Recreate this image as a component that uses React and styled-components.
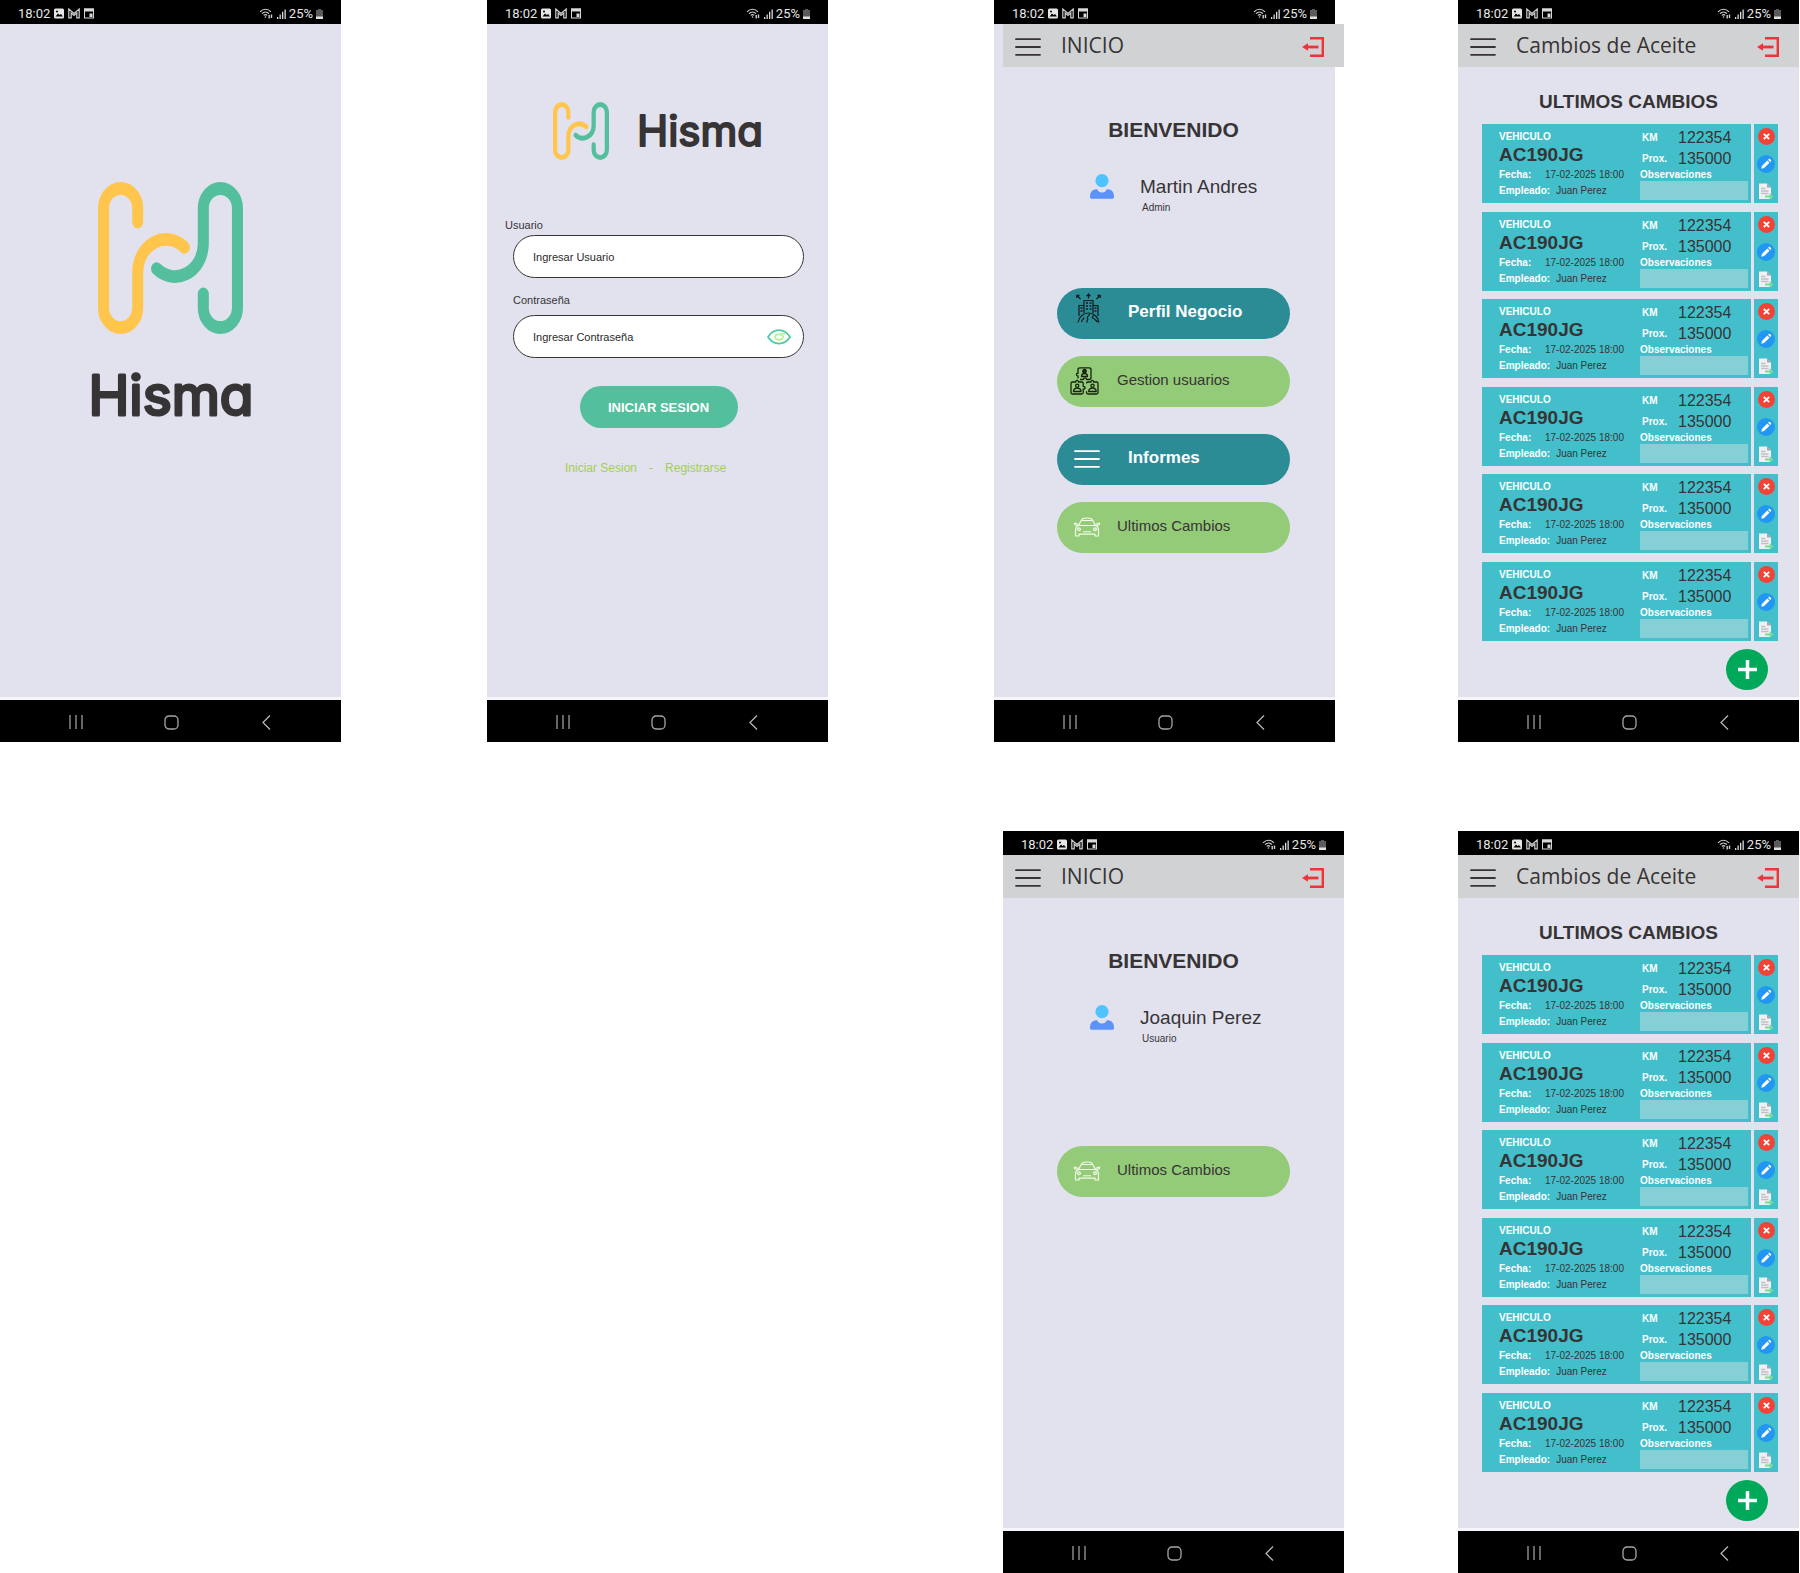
import React, { useId } from "react";
import styled, { createGlobalStyle } from "styled-components";

const color = {
  ink: "#373435",
  screen: "#e2e2ef",
  header: "#d1d2d4",
  card: "#42bfcb",
  field: "#84d0d6",
  green: "#54bf9d",
  yellow: "#ffc54d",
  teal: "#2c8c96",
  lime: "#94cb78",
  link: "#a2d04a",
  red: "#f03339",
};

const GlobalStyle = createGlobalStyle`
  *, *::before, *::after { box-sizing: border-box; }
  body {
    margin: 0;
    background: #fff;
    color: ${color.ink};
    font-family: "Liberation Sans", Arial, sans-serif;
  }
  h1, h2, p, dl, dt, dd, ul { margin: 0; padding: 0; font-weight: inherit; }
  button, input { font: inherit; color: inherit; margin: 0; padding: 0; }
  button { border: 0; background: none; cursor: pointer; }
  a { color: inherit; text-decoration: none; }
  svg { display: block; flex: none; }
`;

const Board = styled.main`
  display: grid;
  grid-template-columns:
    minmax(341px, 487fr) minmax(341px, 507fr)
    minmax(350px, 464fr) 342px;
  row-gap: 89px;
  align-items: start;
`;

const Slot = styled.div`
  grid-column: ${(p) => p.$column};
  width: ${(p) => (p.$wide ? "350px" : "341px")};
  display: flex;
  justify-content: ${(p) => (p.$end ? "flex-end" : "flex-start")};
`;

/* ---------- phone shell ---------- */

const Shell = styled.section`
  width: 341px;
  min-height: 742px;
  display: flex;
  flex-direction: column;
`;

const StatusBar = styled.div`
  height: 24px;
  padding: 3px 18px 0 18px;
  display: flex;
  align-items: center;
  justify-content: space-between;
  background: #000;
  color: #e6e6e6;
  font: 13px/20px Roboto, sans-serif;
`;

const StatusGroup = styled.div`
  display: flex;
  align-items: center;
  gap: 3px;
`;

const Screen = styled.div`
  flex: 1;
  background: ${color.screen};
  border-bottom: 3px solid #f5f5fa;
`;

const NavBar = styled.nav`
  height: 42px;
  padding: 2px 59px 0 60px;
  display: flex;
  align-items: center;
  justify-content: space-between;
  background: #000;
`;

const NavButton = styled.button`
  width: 32px;
  height: 32px;
  display: grid;
  place-items: center;
`;

function Phone({ label, children }) {
  return (
    <Shell aria-label={label}>
      <StatusBar>
        <StatusGroup>
          <span>18:02</span>
          <svg width="12" height="11" viewBox="0 0 12 11">
            <rect x="1" y="0.5" width="10" height="10" rx="1.5" fill="#e6e6e6" />
            <path d="M2.5 8.5 5 5.5l1.6 1.6L8 6l2 2.5z" fill="#000" />
            <circle cx="4" cy="3.4" r="1" fill="#000" />
          </svg>
          <svg width="12" height="11" viewBox="0 0 12 11" fill="none" stroke="#cfcfcf" strokeWidth="1.2">
            <path d="M.8 1v8.800h2.400V5L6 7.500 8.800 5v4.800h2.400V1L6 5.500z" />
          </svg>
          <svg width="12" height="11" viewBox="0 0 12 11">
            <rect x="1.5" y="1" width="9" height="9" fill="none" stroke="#d8d8d8" />
            <path d="M1 .5h10v3.100H1zM6.500 5.500h3v3.500h-3z" fill="#d8d8d8" />
          </svg>
        </StatusGroup>
        <StatusGroup>
          <svg width="15" height="11" viewBox="0 0 14 11" fill="none" stroke="#cfcfcf" strokeWidth="1.200">
            <path d="M.6 3.800C3.800.4 8.200.4 11.400 3.800M2.500 5.600c2-2 5-2 7 0M4.300 7.400c1-1 2.400-1 3.400 0" />
            <circle cx="6" cy="9" r="0.8" fill="#cfcfcf" stroke="none" />
            <path d="M9.700 7v3.500M12 6.500V10" strokeWidth="1.400" />
          </svg>
          <svg width="9" height="10" viewBox="0 0 9 10" fill="#dcdcdc">
            <path d="M0 8h1.300v2H0zM2.500 5.500h1.300V10H2.500zM5 2.800h1.300V10H5zM7.500.500h1.300V10H7.500z" />
          </svg>
          <span>25%</span>
          <svg width="7" height="10" viewBox="0 0 7 10">
            <path d="M2 0h3v1h2v9H0V1h2z" fill="#5b5b5b" />
            <path d="M0 7.500h7V10H0z" fill="#e0e0e0" />
          </svg>
        </StatusGroup>
      </StatusBar>
      <Screen>{children}</Screen>
      <NavBar aria-label="Sistema">
        <NavButton type="button" aria-label="Recientes">
          <svg width="14" height="14" viewBox="0 0 14 14" stroke="#9b9b9b" strokeWidth="1.300">
            <path d="M1 0v14M7 0v14M13 0v14" />
          </svg>
        </NavButton>
        <NavButton type="button" aria-label="Inicio">
          <svg width="15" height="15" viewBox="0 0 15 15" fill="none" stroke="#a5a5a5" strokeWidth="1.300">
            <rect x="1" y="1" width="13" height="13" rx="4" />
          </svg>
        </NavButton>
        <NavButton type="button" aria-label="Volver">
          <svg width="9" height="15" viewBox="0 0 9 15" fill="none" stroke="#b5b5b5" strokeWidth="1.300">
            <path d="M8 .5 1 7.500l7 7" />
          </svg>
        </NavButton>
      </NavBar>
    </Shell>
  );
}

/* ---------- brand ---------- */

const loop =
  "M138.300 120V79A59.500 59.500 0 0 0 19.250 79V377A59.500 59.500 0 0 0 138.300 377V268.600A98.600 98.600 0 0 1 301 196";

function Mark({ width, height }) {
  return (
    <svg width={width} height={height} viewBox="0 0 505 456" preserveAspectRatio="none" aria-hidden="true">
      <g fill="none" strokeWidth="38.500" strokeLinecap="round">
        <path d={loop} stroke={color.yellow} />
        <path d={loop} stroke={color.green} transform="rotate(180 252.500 228)" />
      </g>
    </svg>
  );
}

const WordText = styled.text`
  font-family: Inter, "Open Sans", sans-serif;
  font-size: ${(p) => p.$size}px;
  font-weight: 400;
  font-feature-settings: "cv11";
  fill: ${color.ink};
  stroke: ${color.ink};
  stroke-width: ${(p) => p.$stroke}px;
  stroke-linejoin: round;
`;

function Wordmark({ size, stroke, width, height, baseline }) {
  return (
    <svg width={width} height={height}>
      <WordText x={width / 2} y={baseline} textAnchor="middle" $size={size} $stroke={stroke}>
        Hisma
      </WordText>
    </svg>
  );
}

const Splash = styled.div`
  padding-top: 158px;
  display: flex;
  flex-direction: column;
  align-items: center;
  gap: 27px;
`;

/* ---------- login ---------- */

const LoginForm = styled.form`
  padding-top: 78px;
  display: flex;
  flex-direction: column;
`;

const Brand = styled.div`
  padding-left: 66px;
  display: flex;
  align-items: center;
  gap: 26px;
`;

const Field = styled.div`
  margin-top: ${(p) => p.$top}px;
  padding: 0 24px 0 26px;
  display: flex;
  flex-direction: column;
  gap: ${(p) => p.$gap}px;
`;

const FieldLabel = styled.label`
  margin-left: ${(p) => (p.$outdent ? "-8px" : "0")};
  font-size: 11px;
  line-height: 14px;
`;

const FieldBox = styled.div`
  height: 43px;
  padding: 0 12px 0 19px;
  display: flex;
  align-items: center;
  border: 1px solid ${color.ink};
  border-radius: 22px;
  background: #fff;
`;

const TextInput = styled.input`
  flex: 1;
  min-width: 0;
  height: 100%;
  border: 0;
  outline: 0;
  background: none;
  font-size: 11px;
  &::placeholder { color: #2b2a29; opacity: 1; }
`;

const Submit = styled.button`
  align-self: center;
  width: 158px;
  height: 42px;
  margin: 28px 0 0 2px;
  border-radius: 21px;
  background: ${color.green};
  color: #fff;
  font-size: 13px;
  font-weight: 700;
`;

const Links = styled.div`
  margin-top: 33px;
  padding-left: 78px;
  display: flex;
  gap: 12px;
  color: ${color.link};
  font-size: 12px;
  line-height: 14px;
`;

function Login() {
  const user = useId();
  const pass = useId();
  return (
    <LoginForm onSubmit={(e) => e.preventDefault()}>
      <Brand>
        <Mark width={56} height={58} />
        <Wordmark size={42} stroke={2} width={130} height={54} baseline={42} />
      </Brand>
      <Field $top={58} $gap={3}>
        <FieldLabel htmlFor={user} $outdent>Usuario</FieldLabel>
        <FieldBox>
          <TextInput id={user} type="text" placeholder="Ingresar Usuario" />
        </FieldBox>
      </Field>
      <Field $top={15} $gap={8}>
        <FieldLabel htmlFor={pass}>Contraseña</FieldLabel>
        <FieldBox>
          <TextInput id={pass} type="password" placeholder="Ingresar Contraseña" />
          <button type="button" aria-label="Mostrar contraseña">
            <svg width="24" height="16" viewBox="0 0 24 16" fill="none" strokeWidth="1.800">
              <path d="M1 8C3.500 4.200 7.500 1.200 12 1.200S20.500 4.200 23 8c-2.500 3.800-6.500 6.600-11 6.600S3.500 11.800 1 8z" stroke="#4dc9a3" />
              <ellipse cx="12" cy="8" rx="4" ry="2.700" stroke="#bdf09a" strokeWidth="2" />
              <path d="M14.500 4.800h4" stroke="#bdf09a" strokeWidth="1.500" />
            </svg>
          </button>
        </FieldBox>
      </Field>
      <Submit type="submit">INICIAR SESION</Submit>
      <Links>
        <a href="#iniciar">Iniciar Sesion</a>
        <span>-</span>
        <a href="#registrarse">Registrarse</a>
      </Links>
    </LoginForm>
  );
}

/* ---------- app header ---------- */

const HeaderBar = styled.header`
  height: 43px;
  padding: 0 20px 0 12px;
  display: flex;
  align-items: center;
  background: ${color.header};
`;

const HeaderTitle = styled.h1`
  flex: 1;
  padding: 0 0 2px 20px;
  font: 21px/26px "Open Sans", "Noto Sans", sans-serif;
`;

const HeaderButton = styled.button`
  padding-top: 2px;
`;

function Bars({ stroke }) {
  return (
    <svg width="26" height="18" viewBox="0 0 26 18" stroke={stroke} strokeWidth="1.800" strokeLinecap="round">
      <path d="M1 1.200h24M1 9h24M1 16.800h24" />
    </svg>
  );
}

function Header({ title }) {
  return (
    <HeaderBar>
      <HeaderButton type="button" aria-label="Menú">
        <Bars stroke={color.ink} />
      </HeaderButton>
      <HeaderTitle>{title}</HeaderTitle>
      <HeaderButton type="button" aria-label="Salir">
        <svg width="22" height="20" viewBox="0 0 22 20">
          <path d="M8 1.200h12.800v17.600H8" fill="none" stroke={color.red} strokeWidth="2.400" />
          <path d="M5 10h11.500" stroke={color.red} strokeWidth="2.800" />
          <path d="M0 10l6-3.800v7.600z" fill={color.red} />
        </svg>
      </HeaderButton>
    </HeaderBar>
  );
}

/* ---------- home ---------- */

const HomeView = styled.div`
  margin: ${(p) => (p.$shifted ? "0 -9px 0 9px" : "0")};
`;

const Welcome = styled.h2`
  padding-top: 50px;
  text-align: center;
  font-size: 21px;
  line-height: 26px;
  font-weight: 700;
`;

const UserRow = styled.div`
  margin-top: 31px;
  padding-left: 87px;
  display: flex;
  align-items: flex-start;
  gap: 26px;
`;

const UserName = styled.p`
  font-size: 19px;
  line-height: 26px;
`;

const UserRole = styled.p`
  padding-left: 2px;
  font-size: 10px;
  line-height: 16px;
`;

const Menu = styled.div`
  margin-top: ${(p) => (p.$low ? "99px" : "72px")};
  padding: 0 54px;
  display: flex;
  flex-direction: column;
  gap: 27px;
`;

const MenuGroup = styled.div`
  display: flex;
  flex-direction: column;
  gap: 17px;
`;

const Pill = styled.button`
  height: 51px;
  padding-bottom: 4px;
  display: flex;
  align-items: center;
  border-radius: 26px;
  text-align: left;
  background: ${(p) => (p.$main ? color.teal : color.lime)};
  color: ${(p) => (p.$main ? "#fff" : color.ink)};
  font-size: ${(p) => (p.$main ? 17 : 15)}px;
  font-weight: ${(p) => (p.$main ? 700 : 400)};
`;

const PillIcon = styled.span`
  width: 60px;
  margin-right: ${(p) => (p.$main ? "11px" : "0")};
  padding-top: 3px;
  display: flex;
  justify-content: center;
`;

const CityIcon = () => (
  <svg width="28" height="40" viewBox="-3 0 28 40" fill="none" stroke="#10191b" strokeWidth="1.200">
    <path d="M8 20V7.500h9V20M8 12.500H3V23M17 12.500h5V23" />
    <path d="M10 10h2M13.500 10h2M10 13h2M13.500 13h2M10 16h2M13.500 16h2M4.500 15h2M4.500 18h2M18.500 15h2M18.500 18h2" strokeWidth="1.600" />
    <path d="M2 29.500c1-6 5.500-9.500 10.500-9.500S22 23.500 23 29.500M5.500 29c.5-2.500 2-2.500 2.500-4.500M11 29.500c-.5-2 1.500-2.500.5-4.500s2-2 2-4M22 29c-2-.5-2.500-3-4.500-3.500s-1-2 0-3" />
    <path d="M12.500 5.500V1.500M4.500 6 1.500 3M20.500 6l3-3" />
    <path d="M10.500 3l2-2.500 2 2.500zM.5 5V2h3zM24.500 5V2h-3z" fill="#10191b" strokeWidth=".6" />
  </svg>
);

const TeamIcon = () => (
  <svg width="34" height="28" viewBox="0 0 34 28" fill="none" stroke="#16210f" strokeWidth="1.300" strokeLinejoin="round">
    <path d="M8 11.500V8.800c-2 .6-2-3 0-2.500V2.500C8 1 8.500.8 10 .8h9c1.500 0 2 .4 2 1.700v8c0 1.500-.5 2-2 2h-2.500c.5-2-3.500-2-3 0H10" />
    <circle cx="14.500" cy="4.200" r="1.700" fill="#16210f" />
    <path d="M11.500 9.500c0-4 6-4 6 0z" />
    <path d="M2.500 15h3.300c-.6-2 3.200-2 2.600 0h3.300c1 0 1.500.5 1.500 1.500v3c2.500-.8 2.500 3.300 0 2.500v3.500c0 1-.5 1.500-1.500 1.500H2.500C1.500 27 1 26.500 1 25.500v-9c0-1 .5-1.500 1.500-1.500z" />
    <circle cx="7.200" cy="18.800" r="1.600" />
    <path d="M3.500 24.500c0-4.500 7.500-4.500 7.500 0z" />
    <path d="M16.500 16.500c0-1 .5-1.500 1.500-1.500h3c-.4-2 3-2 2.600 0h3c1 0 1.400.5 1.400 1.500v9c0 1-.5 1.500-1.500 1.500H18c-1 0-1.500-.5-1.500-1.500v-1.300" />
    <circle cx="22.500" cy="18.800" r="1.600" />
    <path d="M18.700 24.500c0-4.500 7.500-4.500 7.500 0z" />
  </svg>
);

const CarIcon = () => (
  <svg width="28" height="20" viewBox="0 0 28 20" fill="none" stroke="#f3fbe9" strokeWidth="1.200" strokeLinejoin="round">
    <path d="M5.500 8.500 8.500 3C9.200 1.600 10 1 14 1s4.800.6 5.500 2l3 5.500z" />
    <path d="M5.500 7.500 2.500 6.200c-1.500-.4-1.700 1.600 0 1.800l1.500.4M22.500 7.500l3-1.300c1.500-.4 1.700 1.600 0 1.800l-1.500.4" />
    <path d="M5.500 8.500C3 9.500 2.500 11 2.500 13v6h3.500v-1.800h16V19h3.500v-6c0-2-.5-3.500-3-4.500" />
    <circle cx="6" cy="12.300" r="1.400" />
    <circle cx="22" cy="12.300" r="1.400" />
    <path d="M10 14.800h8M9 3.500h10" strokeWidth="1" />
  </svg>
);

const menuItems = {
  perfil: { text: "Perfil Negocio", main: true, icon: <CityIcon /> },
  gestion: { text: "Gestion usuarios", icon: <TeamIcon /> },
  informes: { text: "Informes", main: true, icon: <Bars stroke="#fff" /> },
  cambios: { text: "Ultimos Cambios", icon: <CarIcon /> },
};

function Home({ name, role, groups, shifted, low }) {
  return (
    <HomeView $shifted={shifted}>
      <Header title="INICIO" />
      <Welcome>BIENVENIDO</Welcome>
      <UserRow>
        <svg width="24" height="25" viewBox="0 0 24 25" aria-hidden="true">
          <path d="M0 23c0-5 2-7.500 6-7.800h1.200c.8 2 2.500 3.300 4.800 3.300s4-1.300 4.800-3.300H18c4 .3 6 2.800 6 7.800 0 1-.6 1.800-1.700 1.800H1.700C.8 24.800 0 24 0 23z" fill="#5c93fb" />
          <circle cx="12" cy="6.700" r="6.600" fill="#4fc3ff" />
        </svg>
        <div>
          <UserName>{name}</UserName>
          <UserRole>{role}</UserRole>
        </div>
      </UserRow>
      <Menu $low={low}>
        {groups.map((keys) => (
          <MenuGroup key={keys[0]}>
            {keys.map((key) => {
              const { text, main, icon } = menuItems[key];
              return (
                <Pill key={key} type="button" $main={main}>
                  <PillIcon $main={main}>{icon}</PillIcon>
                  {text}
                </Pill>
              );
            })}
          </MenuGroup>
        ))}
      </Menu>
    </HomeView>
  );
}

/* ---------- oil changes ---------- */

const ListView = styled.div`
  display: flex;
  flex-direction: column;
`;

const ListTitle = styled.h2`
  padding: 24px 0 11px;
  text-align: center;
  font-size: 19px;
  line-height: 22px;
  font-weight: 700;
`;

const CardList = styled.ul`
  height: 517px;
  padding: 0 21px 0 24px;
  display: flex;
  flex-direction: column;
  justify-content: space-between;
  list-style: none;
`;

const CardRow = styled.li`
  height: 79px;
  display: flex;
  gap: 3px;
`;

const Card = styled.article`
  flex: 1;
  padding: 3px 3px 3px 17px;
  display: flex;
  justify-content: space-between;
  background: ${color.card};
  font-size: 10px;
`;

const Vehicle = styled.div`
  padding-top: 4px;
`;

const Caption = styled.p`
  color: #fff;
  font-weight: 700;
  line-height: 12px;
`;

const Plate = styled.p`
  font-size: 19px;
  line-height: 24px;
  font-weight: 700;
`;

const Detail = styled.dl`
  display: flex;
  gap: 6px;
  line-height: 16px;
  dt { min-width: 40px; color: #fff; font-weight: 700; }
`;

const Readings = styled.div`
  width: 108px;
`;

const Reading = styled.dl`
  display: flex;
  align-items: center;
  line-height: 21px;
  dt { width: 38px; padding-left: 2px; color: #fff; font-weight: 700; }
  dd { font-size: 16px; }
`;

const NotesLabel = styled.label`
  display: block;
  color: #fff;
  font-weight: 700;
  line-height: 12px;
`;

const NotesInput = styled.input`
  display: block;
  width: 100%;
  height: 19px;
  border: 0;
  background: ${color.field};
`;

const Actions = styled.div`
  width: 24px;
  padding: 4px 0 3px;
  display: flex;
  flex-direction: column;
  align-items: center;
  justify-content: space-between;
  background: ${color.card};
`;

const AddButton = styled.button`
  align-self: flex-end;
  width: 42px;
  height: 41px;
  margin: 8px 31px 0 0;
  display: grid;
  place-items: center;
  border-radius: 50%;
  background: #00a859;
`;

function ChangeCard() {
  const notes = useId();
  return (
    <CardRow>
      <Card>
        <Vehicle>
          <Caption>VEHICULO</Caption>
          <Plate>AC190JG</Plate>
          <Detail><dt>Fecha:</dt><dd>17-02-2025 18:00</dd></Detail>
          <Detail><dt>Empleado:</dt><dd>Juan Perez</dd></Detail>
        </Vehicle>
        <Readings>
          <Reading><dt>KM</dt><dd>122354</dd></Reading>
          <Reading><dt>Prox.</dt><dd>135000</dd></Reading>
          <NotesLabel htmlFor={notes}>Observaciones</NotesLabel>
          <NotesInput id={notes} type="text" />
        </Readings>
      </Card>
      <Actions>
        <button type="button" aria-label="Eliminar">
          <svg width="17" height="17" viewBox="0 0 17 17">
            <circle cx="8.500" cy="8.500" r="8.500" fill="#f44336" />
            <path d="M5.800 5.800l5.400 5.400M11.200 5.800l-5.400 5.400" stroke="#fff" strokeWidth="1.800" />
          </svg>
        </button>
        <button type="button" aria-label="Editar">
          <svg width="18" height="18" viewBox="0 0 18 18">
            <circle cx="9" cy="9" r="9" fill="#2196f3" />
            <path d="M4.300 13.700l.6-2.800 5.400-5.400 2.200 2.200-5.400 5.400zM11 4.800l.8-.8c.4-.4.800-.4 1.200 0l1 1c.4.400.4.800 0 1.200l-.8.800z" fill="#fff" />
          </svg>
        </button>
        <button type="button" aria-label="Exportar">
          <svg width="16" height="17" viewBox="0 0 16 17">
            <path d="M1 .5h8l4 4V16H1z" fill="#f1f1f3" />
            <path d="M9 .5l4 4H9z" fill="#a9a3b0" />
            <path d="M3 5.500h4.500M3 8h7.500M3 10.500h7.500" stroke="#c3bfc8" strokeWidth="1.300" />
            <path d="M7 13.500h6" stroke="#78dd9b" strokeWidth="2" />
            <path d="M11.500 10.300l4 3.200-4 3.200z" fill="#78dd9b" />
          </svg>
        </button>
      </Actions>
    </CardRow>
  );
}

function Changes() {
  return (
    <ListView>
      <Header title="Cambios de Aceite" />
      <ListTitle>ULTIMOS CAMBIOS</ListTitle>
      <CardList>
        {Array.from({ length: 6 }, (_, i) => (
          <ChangeCard key={i} />
        ))}
      </CardList>
      <AddButton type="button" aria-label="Agregar">
        <svg width="19" height="19" viewBox="0 0 19 19" stroke="#fff" strokeWidth="3.500">
          <path d="M9.500 0v19M0 9.500h19" />
        </svg>
      </AddButton>
    </ListView>
  );
}

export default function App() {
  return (
    <>
      <GlobalStyle />
      <Board>
        <Slot $column={1}>
          <Phone label="Bienvenida">
            <Splash>
              <Mark width={145} height={152} />
              <Wordmark size={55} stroke={3} width={180} height={70} baseline={54} />
            </Splash>
          </Phone>
        </Slot>
        <Slot $column={2}>
          <Phone label="Acceso">
            <Login />
          </Phone>
        </Slot>
        <Slot $column={3} $wide>
          <Phone label="Inicio administrador">
            <Home
              name="Martin Andres"
              role="Admin"
              groups={[["perfil", "gestion"], ["informes", "cambios"]]}
              shifted
            />
          </Phone>
        </Slot>
        <Slot $column={4}>
          <Phone label="Cambios de aceite, administrador">
            <Changes />
          </Phone>
        </Slot>
        <Slot $column={3} $wide $end>
          <Phone label="Inicio usuario">
            <Home name="Joaquin Perez" role="Usuario" groups={[["cambios"]]} low />
          </Phone>
        </Slot>
        <Slot $column={4}>
          <Phone label="Cambios de aceite, usuario">
            <Changes />
          </Phone>
        </Slot>
      </Board>
    </>
  );
}
